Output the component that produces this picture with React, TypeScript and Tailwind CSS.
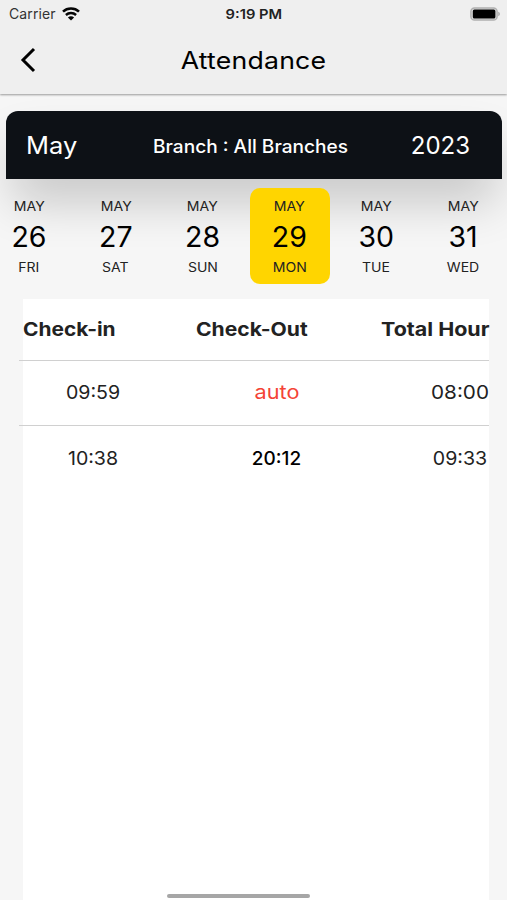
const days = [
  { date: '26', name: 'FRI' },
  { date: '27', name: 'SAT' },
  { date: '28', name: 'SUN' },
  { date: '29', name: 'MON', active: true },
  { date: '30', name: 'TUE' },
  { date: '31', name: 'WED' },
];

const rows = [
  { checkIn: '09:59', checkOut: 'auto', total: '08:00', auto: true },
  { checkIn: '10:38', checkOut: '20:12', total: '09:33', auto: false },
];

function StatusBar() {
  return (
    <div className="grid h-7 grid-cols-3 items-center pl-[9px] pr-[7px] text-[#333]">
      <div className="flex items-center gap-[6px]">
        <span className="text-[14px] leading-5 tracking-[0.1px]">Carrier</span>
        <svg width="18" height="14" viewBox="0 0 18 14" fill="none" stroke="#050505">
          <path d="M1 4.6C5.4.5 12.6.5 17 4.6" strokeWidth="2.6" />
          <path d="M3.9 8C6.8 5.3 11.2 5.3 14.1 8" strokeWidth="2.4" />
          <path d="M9 13.5 5.9 10.5C7.7 8.8 10.3 8.8 12.1 10.5Z" fill="#050505" stroke="none" />
        </svg>
      </div>
      <span className="-ml-[2px] scale-x-[1.09] text-center text-[13.5px] font-semibold text-[#222]">9:19 PM</span>
      <svg className="-mt-px justify-self-end" width="30" height="14" viewBox="0 0 30 14">
        <rect x=".9" y=".9" width="26.2" height="12.2" rx="3.6" fill="#dedede" stroke="#b0b0b0" strokeWidth="1.5" />
        <rect x="2.8" y="2.5" width="22.6" height="9" rx="1.6" fill="#000" />
        <path d="M28.3 4.8c2 .7 2 3.7 0 4.4Z" fill="#a3a3a3" />
      </svg>
    </div>
  );
}

export default function App() {
  return (
    <div className="flex h-[900px] w-[507px] flex-col overflow-hidden bg-[#f6f6f6] font-['Inter',sans-serif] text-black">
      <header className="z-10 h-[94px] shrink-0 bg-[#efefef] shadow-[0_1px_2px_rgba(0,0,0,0.38)]">
        <StatusBar />
        <div className="grid h-[64px] grid-cols-[60px_1fr_60px] items-center">
          <svg className="ml-[20px]" width="16" height="26" viewBox="0 0 16 26" fill="none" stroke="#000" strokeWidth="3">
            <path d="M14 2 3 13 14 24" />
          </svg>
          <h1 className="scale-x-[1.11] pt-px text-center text-[24px] leading-8 tracking-[0.2px]">Attendance</h1>
        </div>
      </header>

      <section className="ml-[6px] mr-[5px] mt-[17px] grid h-[68px] shrink-0 grid-cols-[110px_1fr_110px] items-center rounded-t-xl bg-[#0d1116] pt-[2px] text-white shadow-[0_28px_48px_-6px_rgba(0,0,0,0.2)]">
        <span className="ml-5 origin-left scale-x-[1.06] text-[24px]">May</span>
        <span className="-ml-[7px] scale-x-[1.06] text-center text-[18px] font-medium">Branch : All Branches</span>
        <span className="pr-8 text-right text-[24px]">2023</span>
      </section>

      <nav className="-ml-[10.5px] mt-[9px] flex h-24 shrink-0 gap-[6.8px]">
        {days.map((day) => (
          <div
            key={day.date}
            className={`flex w-20 shrink-0 flex-col items-center rounded-[10px] pt-[9px] ${day.active ? 'bg-[#ffd500]' : ''}`}
          >
            <span className="-ml-px scale-x-[1.08] text-[13px] leading-[18px] text-[#222]">MAY</span>
            <span className="-ml-px pt-px text-[28.5px] leading-[42px]">{day.date}</span>
            <span className="-ml-px scale-x-[1.08] text-[13px] leading-[18px] text-[#222]">{day.name}</span>
          </div>
        ))}
      </nav>

      <main className="ml-[23px] mr-[18px] mt-[15px] flex-1 bg-white text-[19px] text-[#222]">
        <div className="-ml-1 w-[470px]">
          <div className="flex h-[62px] items-center whitespace-nowrap border-b border-[#d0d0d0] pl-1 pt-px font-bold">
            <span className="w-[173px] shrink-0 origin-left scale-x-[1.1]">Check-in</span>
            <span className="w-[185px] shrink-0 origin-left scale-x-[1.11]">Check-Out</span>
            <span className="shrink-0 origin-left scale-x-[1.13]">Total Hour</span>
          </div>
          {rows.map((row, i) => (
            <div
              key={row.checkIn}
              className={`flex h-[65px] items-center pt-px ${i === 0 ? 'border-b border-[#d0d0d0]' : ''}`}
            >
              <span className="ml-[34px] w-20 shrink-0 scale-x-[1.03] text-center">{row.checkIn}</span>
              <span
                className={`ml-[103.5px] w-20 shrink-0 text-center ${row.auto ? 'scale-x-[1.14] text-[#f44336]' : 'font-medium text-black'}`}
              >
                {row.checkOut}
              </span>
              <span className={`ml-[103px] w-20 shrink-0 text-center ${i === 0 ? 'scale-x-[1.09]' : 'scale-x-[1.03]'}`}>
                {row.total}
              </span>
            </div>
          ))}
        </div>
      </main>

      <div className="-mt-[6px] mb-[2px] ml-[167px] h-1 w-[143px] shrink-0 rounded-full bg-[#a6a6a6]" />
    </div>
  );
}
